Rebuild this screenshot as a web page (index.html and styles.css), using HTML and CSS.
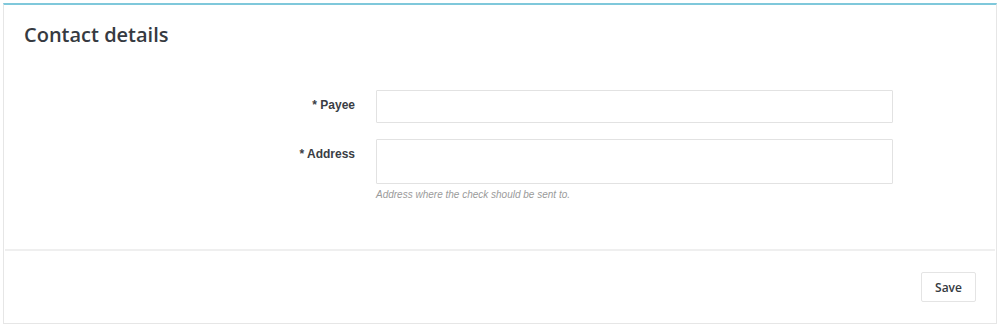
FILE: index.html
```html
<!DOCTYPE html>
<html>
<head>
<meta charset="utf-8">
<link rel="stylesheet" href="styles.css">
</head>
<body>
<div class="card">
  <h3 class="card-title">Contact details</h3>
  <div class="card-body">
    <div class="form-row">
      <label class="form-label">* Payee</label>
      <div class="form-field"><input class="input" type="text"></div>
    </div>
    <div class="form-row">
      <label class="form-label">* Address</label>
      <div class="form-field">
        <textarea class="textarea"></textarea>
        <p class="help">Address where the check should be sent to.</p>
      </div>
    </div>
  </div>
  <div class="card-footer">
    <button class="btn">Save</button>
  </div>
</div>
</body>
</html>
```
FILE: styles.css
```css
html, body {
  margin: 0;
  padding: 0;
  background: #fff;
}
body {
  padding: 3px 3px 0 3px;
  font-family: "Liberation Sans", Arial, sans-serif;
}
.card {
  width: 994px;
  height: 321px;
  box-sizing: border-box;
  border: 1px solid #e6e6e6;
  border-top: 2px solid #7fc8db;
  background: #fff;
  display: flex;
  flex-direction: column;
}
.card-title {
  margin: 0;
  box-sizing: border-box;
  padding: 16px 0 0 20px;
  height: 38px;
  font-family: "Open Sans", sans-serif;
  font-weight: 600;
  font-size: 20px;
  line-height: 28px;
  color: #363a41;
}
.card-body {
  padding-top: 47px;
  height: 208px;
  box-sizing: border-box;
  display: flex;
  flex-direction: column;
  gap: 16px;
  border-bottom: 2px solid #efefef;
  margin: 0 1px 0 1px;
}
.form-row {
  display: grid;
  grid-template-columns: 350px 517px;
  column-gap: 21px;
}
.form-label {
  text-align: right;
  font-weight: bold;
  font-size: 12px;
  line-height: 14px;
  color: #3a3d44;
  padding-top: 8px;
}
.input, .textarea {
  display: block;
  width: 517px;
  box-sizing: border-box;
  border: 1px solid #e2e2e2;
  border-radius: 1px;
  background: #fff;
  margin: 0;
  font: inherit;
}
.input { height: 33px; }
.textarea { height: 45px; resize: none; }
.help {
  margin: 5px 0 0 0;
  font-style: italic;
  font-size: 10px;
  line-height: 12px;
  color: #9a9a9a;
}
.card-footer {
  flex: 1;
  display: flex;
  justify-content: flex-end;
  align-items: flex-start;
  padding: 21px 20px 0 0;
}
.btn {
  width: 55px;
  height: 30px;
  background: #fff;
  border: 1px solid #e4e4e4;
  border-radius: 2px;
  font-family: "Open Sans", sans-serif;
  font-weight: 600;
  font-size: 12px;
  color: #363a41;
  padding: 0;
}
```
